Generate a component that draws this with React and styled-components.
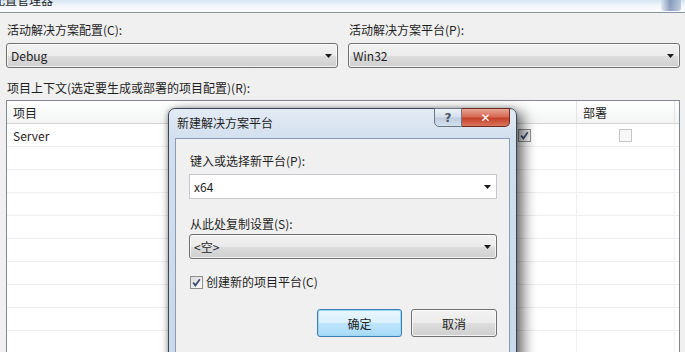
import styled, { createGlobalStyle } from 'styled-components';

const GlobalStyle = createGlobalStyle`
  html, body { margin: 0; padding: 0; }
  body {
    background: #f0f0f0;
    font-family: "Noto Sans CJK SC", "Microsoft YaHei", sans-serif;
    font-size: 12px;
    color: #1e1e1e;
  }
`;

const Window = styled.div`
  position: relative;
  width: 685px;
  height: 352px;
  overflow: hidden;
  display: flex;
  flex-direction: column;
  background: #f0f0f0;
`;

const Caption = styled.div`
  height: 12px;
  flex: none;
  border-bottom: 1px solid #8593a3;
  background: linear-gradient(#d7e4f2, #f3f7fb 50%, #fbfcfe);
  display: flex;
  justify-content: space-between;
  overflow: hidden;
`;

const CaptionText = styled.div`
  margin: -8px 0 0 -7px;
  line-height: 16px;
`;

const CaptionClose = styled.div`
  width: 20px;
  height: 11px;
  margin-right: 4px;
  border-radius: 0 0 3px 3px;
  background: linear-gradient(90deg, #d6e1ee, #4a6494 45%, #9fb3cf);
  opacity: 0.6;
`;

const Body = styled.div`
  flex: 1;
  min-height: 0;
  display: flex;
  flex-direction: column;
  padding: 9px 5px 0 6px;
`;

const TopFields = styled.div`
  display: grid;
  grid-template-columns: 332px 332px;
  gap: 10px;
`;

const Field = styled.div`
  display: flex;
  flex-direction: column;
  gap: 5px;
`;

const Label = styled.div`
  line-height: 16px;
  height: 16px;
  padding-left: 1px;
  margin-top: ${(p) => p.$top || 0}px;
  white-space: nowrap;
`;

const Combo = styled.div`
  box-sizing: border-box;
  height: 25px;
  margin-top: ${(p) => p.$top || 0}px;
  display: flex;
  align-items: center;
  justify-content: space-between;
  padding: 0 5px 0 4px;
  border: 1px solid ${(p) => (p.$editable ? '#c5c8cf' : '#707070')};
  border-radius: ${(p) => (p.$editable ? '0' : '3px')};
  background: ${(p) =>
    p.$editable
      ? '#ffffff'
      : 'linear-gradient(#f2f2f2 0%, #ebebeb 50%, #dddddd 51%, #cfcfcf 100%)'};
  box-shadow: ${(p) => (p.$editable ? 'none' : 'inset 0 0 0 1px rgba(255,255,255,0.7)')};
`;

const Arrow = () => (
  <svg width="7" height="4" viewBox="0 0 7 4">
    <path d="M0 0 H7 L3.5 4 Z" fill="#1a1a1a" />
  </svg>
);

const Table = styled.div`
  margin-top: 4px;
  flex: 1;
  min-height: 0;
  overflow: hidden;
  border: 1px solid #828790;
  border-bottom: none;
  background: #ffffff;
`;

const Row = styled.div`
  box-sizing: border-box;
  height: 23px;
  display: grid;
  grid-template-columns: 193px 140px 132px 105px 98px 1fr;
  border-bottom: 1px solid ${(p) => (p.$header ? '#d5d5d5' : '#eeeeee')};
  background: ${(p) => (p.$header ? 'linear-gradient(#ffffff, #f3f4f5)' : '#ffffff')};
`;

const Cell = styled.div`
  display: flex;
  align-items: center;
  justify-content: ${(p) => (p.$center ? 'center' : 'flex-start')};
  padding: 0 6px;
  border-right: 1px solid
    ${(p) => (p.$plain ? 'transparent' : p.$header ? '#e3e3e3' : '#f0f0f0')};
  white-space: nowrap;
  overflow: hidden;
`;

const Box = styled.span`
  box-sizing: border-box;
  width: 13px;
  height: 13px;
  flex: none;
  display: inline-flex;
  align-items: center;
  justify-content: center;
  border: 1px solid ${(p) => (p.$muted ? '#c4c4c4' : '#8e8f8f')};
  background: ${(p) =>
    p.$muted ? '#f7f7f7' : 'linear-gradient(135deg, #dcdcdc, #fbfbfb)'};
`;

const CheckBox = ({ checked, muted }) => (
  <Box $muted={muted}>
    {checked && (
      <svg width="9" height="9" viewBox="0 0 9 9">
        <path d="M1.2 4.6 L3.4 7.4 L7.8 1.2" fill="none" stroke="#3b4d73" strokeWidth="1.8" />
      </svg>
    )}
  </Box>
);

const Dialog = styled.div`
  position: absolute;
  left: 168px;
  top: 108px;
  width: 349px;
  height: 262px;
  box-sizing: border-box;
  display: flex;
  flex-direction: column;
  padding: 0 6px;
  border: 1px solid #3a4658;
  border-radius: 7px 7px 0 0;
  background: linear-gradient(#e3ebf5 0%, #d2dfee 12%, #c9d8ea 100%);
  box-shadow: 6px 4px 14px rgba(0, 0, 0, 0.6), -1px 0 4px rgba(0, 0, 0, 0.25);
`;

const DialogBar = styled.div`
  height: 29px;
  flex: none;
  display: flex;
  justify-content: space-between;
  align-items: flex-start;
`;

const DialogTitle = styled.div`
  padding: 6px 0 0 2px;
  line-height: 16px;
`;

const BarButtons = styled.div`
  display: flex;
  margin: -1px 0 0 0;
`;

const BarButton = styled.div`
  box-sizing: border-box;
  width: ${(p) => (p.$close ? 48 : 28)}px;
  height: 19px;
  display: flex;
  align-items: center;
  justify-content: center;
  border: 1px solid ${(p) => (p.$close ? '#6d2b22' : '#6b7686')};
  border-radius: ${(p) => (p.$close ? '0 0 5px 0' : '0 0 0 5px')};
  border-left: ${(p) => (p.$close ? 'none' : undefined)};
  background: ${(p) =>
    p.$close
      ? 'linear-gradient(#e8a493 0%, #d66a55 45%, #c4412a 55%, #d9755c 100%)'
      : 'linear-gradient(#eef3f8 0%, #d5dfea 45%, #bfcddd 55%, #d3e0ee 100%)'};
  color: ${(p) => (p.$close ? '#ffffff' : '#4c5566')};
  font-family: "DejaVu Sans", sans-serif;
  font-weight: bold;
  font-size: 12px;
`;

const Client = styled.div`
  flex: 1;
  display: flex;
  flex-direction: column;
  padding: 14px 12px 0 13px;
  border: 1px solid #8a9bb3;
  border-bottom: none;
  background: #f0f0f0;
`;

const CheckRow = styled.div`
  margin-top: 15px;
  height: 16px;
  display: flex;
  align-items: center;
  gap: 3px;
  padding-left: 1px;
  line-height: 16px;
`;

const Buttons = styled.div`
  margin-top: 19px;
  display: flex;
  justify-content: flex-end;
  gap: 9px;
`;

const Button = styled.div`
  box-sizing: border-box;
  width: ${(p) => (p.$primary ? 85 : 86)}px;
  height: 28px;
  display: flex;
  align-items: center;
  justify-content: center;
  border-radius: 3px;
  border: 1px solid ${(p) => (p.$primary ? '#3c7fb1' : '#707070')};
  background: ${(p) =>
    p.$primary
      ? 'linear-gradient(#eaf6fd 0%, #d9f0fc 50%, #bee6fd 51%, #a7d9f5 100%)'
      : 'linear-gradient(#f2f2f2 0%, #ebebeb 50%, #dddddd 51%, #cfcfcf 100%)'};
  box-shadow: ${(p) =>
    p.$primary ? 'inset 0 0 0 1px #9ed8f6' : 'inset 0 0 0 1px rgba(255,255,255,0.75)'};
`;

// columns hidden behind the dialog are left blank, as in the screenshot
const rows = [
  { name: 'Server', build: true, deploy: false },
  ...Array.from({ length: 9 }, () => null),
];

export default function App() {
  return (
    <>
      <GlobalStyle />
      <Window>
        <Caption>
          <CaptionText>配置管理器</CaptionText>
          <CaptionClose />
        </Caption>
        <Body>
          <TopFields>
            <Field>
              <Label>活动解决方案配置(C):</Label>
              <Combo>
                <span>Debug</span>
                <Arrow />
              </Combo>
            </Field>
            <Field>
              <Label>活动解决方案平台(P):</Label>
              <Combo>
                <span>Win32</span>
                <Arrow />
              </Combo>
            </Field>
          </TopFields>
          <Label $top={12}>项目上下文(选定要生成或部署的项目配置)(R):</Label>
          <Table>
            <Row $header>
              <Cell $header $plain>项目</Cell>
              <Cell $header $plain />
              <Cell $header $plain />
              <Cell $header />
              <Cell $header>部署</Cell>
              <Cell $header $plain />
            </Row>
            {rows.map((r, i) => (
              <Row key={i}>
                <Cell $plain>{r ? r.name : ''}</Cell>
                <Cell />
                <Cell />
                <Cell $center>{r && <CheckBox checked={r.build} />}</Cell>
                <Cell $center>{r && <CheckBox checked={r.deploy} muted />}</Cell>
                <Cell $plain />
              </Row>
            ))}
          </Table>
        </Body>

        <Dialog>
          <DialogBar>
            <DialogTitle>新建解决方案平台</DialogTitle>
            <BarButtons>
              <BarButton>?</BarButton>
              <BarButton $close>✕</BarButton>
            </BarButtons>
          </DialogBar>
          <Client>
            <Label>键入或选择新平台(P):</Label>
            <Combo $editable $top={5}>
              <span>x64</span>
              <Arrow />
            </Combo>
            <Label $top={17}>从此处复制设置(S):</Label>
            <Combo $top={2}>
              <span>&lt;空&gt;</span>
              <Arrow />
            </Combo>
            <CheckRow>
              <CheckBox checked />
              <span>创建新的项目平台(C)</span>
            </CheckRow>
            <Buttons>
              <Button $primary>确定</Button>
              <Button>取消</Button>
            </Buttons>
          </Client>
        </Dialog>
      </Window>
    </>
  );
}
